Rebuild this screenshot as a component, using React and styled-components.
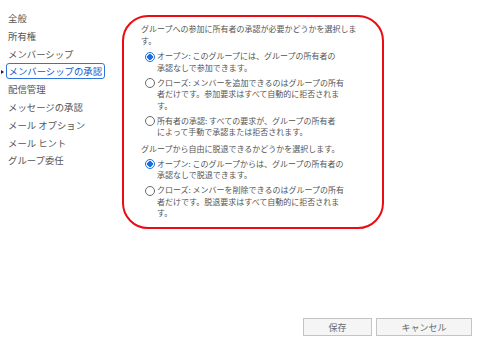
import React from 'react'
import styled, { createGlobalStyle } from 'styled-components'

const GlobalStyle = createGlobalStyle`
  html, body { margin: 0; padding: 0; background: #fff; }
  body { font-family: "Noto Sans CJK JP", "Noto Sans", sans-serif; }
`

const navItems = [
  '全般',
  '所有権',
  'メンバーシップ',
  'メンバーシップの承認',
  '配信管理',
  'メッセージの承認',
  'メール オプション',
  'メール ヒント',
  'グループ委任',
]

const sections = [
  {
    heading: ['グループへの参加に所有者の承認が必要かどうかを選択しま', 'す。'],
    options: [
      { checked: true, lines: ['オープン: このグループには、グループの所有者の', '承認なしで参加できます。'] },
      { checked: false, lines: ['クローズ: メンバーを追加できるのはグループの所有', '者だけです。参加要求はすべて自動的に拒否されま', 'す。'] },
      { checked: false, lines: ['所有者の承認: すべての要求が、グループの所有者', 'によって手動で承認または拒否されます。'] },
    ],
  },
  {
    heading: ['グループから自由に脱退できるかどうかを選択します。'],
    options: [
      { checked: true, lines: ['オープン: このグループからは、グループの所有者の', '承認なしで脱退できます。'] },
      { checked: false, lines: ['クローズ: メンバーを削除できるのはグループの所有', '者だけです。脱退要求はすべて自動的に拒否されま', 'す。'] },
    ],
  },
]

export default function App() {
  return (
    <Page>
      <GlobalStyle />
      <Main>
        <Nav>
          {navItems.map((item, i) => (
            <NavItem key={item} $active={i === 3}>
              <span>{item}</span>
            </NavItem>
          ))}
        </Nav>
        <PanelWrap>
          <Panel>
            {sections.map((s, si) => (
              <Section key={si} $first={si === 0}>
                <Heading>
                  {s.heading.map((l, k) => (
                    <div key={k}>{l}</div>
                  ))}
                </Heading>
                {s.options.map((o, oi) => (
                  <Option key={oi}>
                    <Radio $checked={o.checked} />
                    <OptionText>
                      {o.lines.map((l, k) => (
                        <div key={k}>{l}</div>
                      ))}
                    </OptionText>
                  </Option>
                ))}
              </Section>
            ))}
          </Panel>
        </PanelWrap>
      </Main>
      <Footer>
        <Button $w={69}>保存</Button>
        <Button $w={96}>キャンセル</Button>
      </Footer>
    </Page>
  )
}

const Page = styled.div`
  width: 480px;
  height: 342px;
  display: flex;
  flex-direction: column;
  overflow: hidden;
`

const Main = styled.div`
  flex: 1;
  display: flex;
`

const Nav = styled.div`
  width: 122px;
  padding: 10px 0 0 8px;
  box-sizing: border-box;
  display: flex;
  flex-direction: column;
`

const NavItem = styled.div`
  position: relative;
  height: 17.8px;
  line-height: 17.8px;
  font-size: 9.4px;
  color: ${p => (p.$active ? '#1257c9' : '#555')};
  white-space: nowrap;

  span {
    display: inline-block;
    ${p =>
      p.$active
        ? `
      margin-left: -2px;
      padding: 0 1.5px;
      line-height: 14px;
      border: 1.5px solid #2f74d9;
      border-radius: 3px;
    `
        : ''}
  }

  ${p =>
    p.$active
      ? `
    &::before {
      content: '';
      position: absolute;
      left: -7px;
      top: 7px;
      border-left: 3px solid #222;
      border-top: 2.5px solid transparent;
      border-bottom: 2.5px solid transparent;
    }
  `
      : ''}
`

const PanelWrap = styled.div`
  padding-top: 15px;
`

const Panel = styled.div`
  width: 262px;
  height: 214px;
  box-sizing: border-box;
  border: 2px solid #ec0b12;
  border-radius: 26px;
  padding: 6px 0 0 17px;
  color: #555;
`

const Section = styled.div`
  margin-top: ${p => (p.$first ? 0 : 5)}px;
`

const Heading = styled.div`
  font-size: 8px;
  line-height: 12px;
  white-space: nowrap;
  margin-bottom: ${p => 3}px;
`

const Option = styled.div`
  display: flex;
  align-items: flex-start;
  gap: 2px;
  margin: 0 0 3.5px 4px;
`

const Radio = styled.span`
  flex: none;
  width: 8px;
  height: 8px;
  margin-top: 1.5px;
  border-radius: 50%;
  border: 1px solid ${p => (p.$checked ? '#1a6fe0' : '#6a6a6a')};
  background: ${p =>
    p.$checked ? 'radial-gradient(circle, #1a6fe0 0 2.6px, #fff 3px)' : '#fff'};
`

const OptionText = styled.div`
  font-size: 8px;
  line-height: 11.5px;
  white-space: nowrap;
`

const Footer = styled.div`
  display: flex;
  justify-content: flex-end;
  gap: 4px;
  padding: 0 8px 6px 0;
`

const Button = styled.div`
  width: ${p => p.$w}px;
  height: 18px;
  box-sizing: border-box;
  border: 1px solid #c4c4c4;
  background: #f5f5f5;
  color: #6a6a6a;
  font-size: 9px;
  display: flex;
  align-items: center;
  justify-content: center;
`
